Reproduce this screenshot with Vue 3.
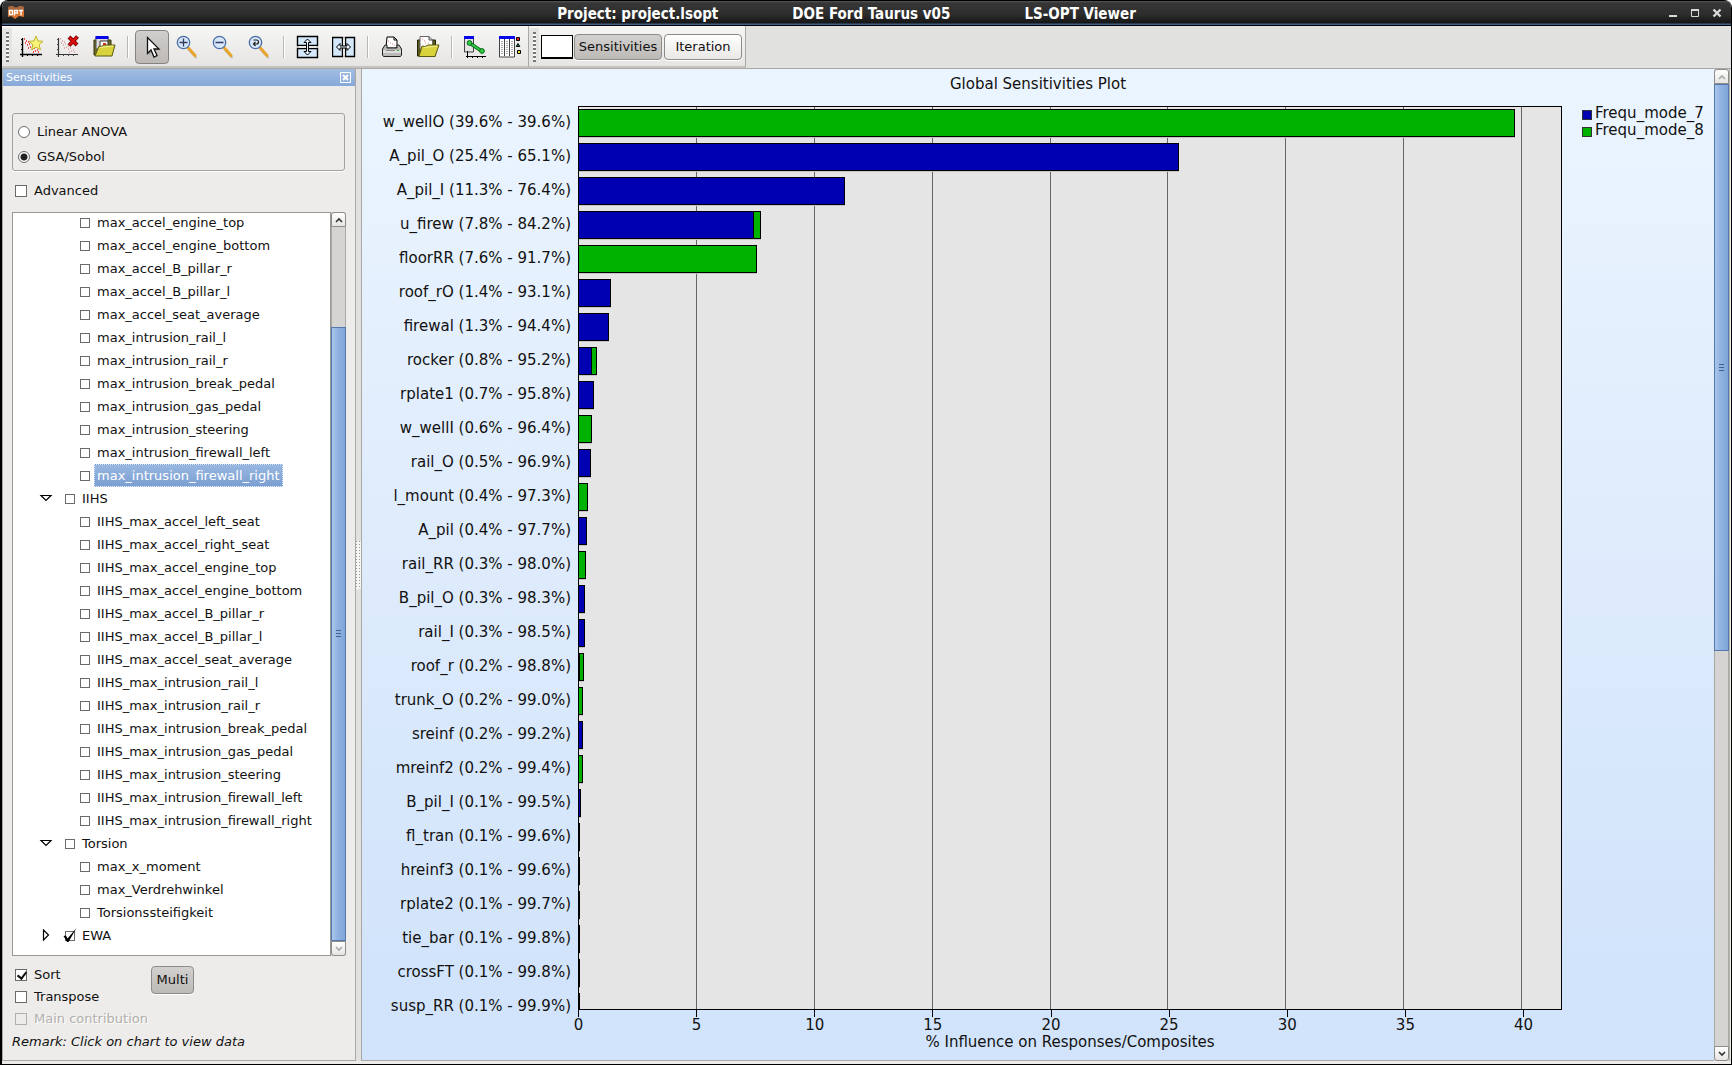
<script setup>
import { ref } from 'vue'

const method = ref('gsa')

const rows = []
const leaf = (name, selected = false) => rows.push({ name, level: 2, selected })
const branch = (name, open, checked = false) => rows.push({ name, level: 1, open, checked })

const accel = ['engine_top', 'engine_bottom', 'B_pillar_r', 'B_pillar_l', 'seat_average']
const intrusion = ['rail_l', 'rail_r', 'break_pedal', 'gas_pedal', 'steering', 'firewall_left', 'firewall_right']

accel.forEach((n) => leaf('max_accel_' + n))
intrusion.forEach((n) => leaf('max_intrusion_' + n, n === 'firewall_right'))
branch('IIHS', true)
;['left_seat', 'right_seat', ...accel].forEach((n) => leaf('IIHS_max_accel_' + n))
intrusion.forEach((n) => leaf('IIHS_max_intrusion_' + n))
branch('Torsion', true)
;['max_x_moment', 'max_Verdrehwinkel', 'Torsionssteifigkeit'].forEach((n) => leaf(n))
branch('EWA', false, true)

const axisMax = 41.65
const ticks = [0, 5, 10, 15, 20, 25, 30, 35, 40]
const share = (v) => (v / axisMax) * 100 + '%'

// name, own share, cumulative share, contribution of mode 7, contribution of mode 8
const bars = [
  ['w_wellO', '39.6', '39.6', 0, 39.7],
  ['A_pil_O', '25.4', '65.1', 25.46, 0],
  ['A_pil_I', '11.3', '76.4', 11.3, 0],
  ['u_firew', '7.8', '84.2', 7.44, 0.3],
  ['floorRR', '7.6', '91.7', 0, 7.55],
  ['roof_rO', '1.4', '93.1', 1.34, 0],
  ['firewal', '1.3', '94.4', 1.27, 0],
  ['rocker', '0.8', '95.2', 0.56, 0.19],
  ['rplate1', '0.7', '95.8', 0.65, 0],
  ['w_wellI', '0.6', '96.4', 0, 0.56],
  ['rail_O', '0.5', '96.9', 0.51, 0],
  ['l_mount', '0.4', '97.3', 0, 0.38],
  ['A_pil', '0.4', '97.7', 0.33, 0],
  ['rail_RR', '0.3', '98.0', 0, 0.28],
  ['B_pil_O', '0.3', '98.3', 0.26, 0],
  ['rail_I', '0.3', '98.5', 0.25, 0],
  ['roof_r', '0.2', '98.8', 0.05, 0.17],
  ['trunk_O', '0.2', '99.0', 0, 0.18],
  ['sreinf', '0.2', '99.2', 0.16, 0],
  ['mreinf2', '0.2', '99.4', 0, 0.17],
  ['B_pil_I', '0.1', '99.5', 0.08, 0],
  ['fl_tran', '0.1', '99.6', 0.05, 0],
  ['hreinf3', '0.1', '99.6', 0.05, 0],
  ['rplate2', '0.1', '99.7', 0.05, 0],
  ['tie_bar', '0.1', '99.8', 0.05, 0],
  ['crossFT', '0.1', '99.8', 0.05, 0],
  ['susp_RR', '0.1', '99.9', 0, 0.05]
]
</script>

<template>
  <div class="window">
    <header class="titlebar">
      <svg class="app-icon" width="18" height="14" viewBox="0 0 18 14">
        <path d="M1 1 L5 0 L9 2 L13 0 L17 1 V11 L12 10 L8 13 L4 10 L1 11 Z" fill="#d9752f" />
        <path d="M1 1 L5 0 L9 2 L13 0 L17 1 V4 H1 Z" fill="#a9673f" />
        <path d="M2.5 4.5h3v4h-3z M7.5 9.500v-5h3v2.500h-3 M12 4.500h4 M14 4.500v5" fill="none" stroke="#fff" stroke-width="1.300" />
      </svg>
      <h1 class="caption"><span>Project: project.lsopt</span><span>DOE Ford Taurus v05</span><span>LS-OPT Viewer</span></h1>
      <div class="controls">
        <button aria-label="Minimize"><svg width="10" height="10"><rect x="1" y="7" width="8" height="2" fill="#d8d8d6" /></svg></button>
        <button aria-label="Maximize"><svg width="10" height="10"><path d="M1.500 1.500h7v7h-7z" fill="none" stroke="#d8d8d6" /><path d="M1 2h8" stroke="#d8d8d6" stroke-width="2" /></svg></button>
        <button aria-label="Close"><svg width="10" height="10"><path d="M1.500 1.500l7 7M8.500 1.500l-7 7" stroke="#d8d8d6" stroke-width="2.400" /></svg></button>
      </div>
    </header>

    <nav class="toolbars">
      <div class="toolbar">
        <i class="handle"></i>
        <button class="tool" aria-label="New plot">
          <svg width="24" height="24" viewBox="0 0 24 24">
            <path d="M2.500 3v19M0 19.500h22" stroke="#000" stroke-width="1.400" />
            <path d="M1 4.500h2M1 9.500h2M1 14.500h2M7.500 19v2M12.500 19v2M17.500 19v2" stroke="#000" />
            <path d="M4 4h1M6 6h1M5 8h1M8 7h1M7 10h1M9 9h1M10 12h1M12 11h1M8 13h1M12 14h1M14 13h1M15 16h1M17 15h1M13 17h1M18 17h1" stroke="#f01818" stroke-width="1.400" />
            <path d="M16 1l2 5 5 .300-4 3.500 1.500 5-4.500-2.800-4.500 2.800 1.500-5-4-3.500 5-.300z" fill="#f6f27a" stroke="#c2b62c" />
          </svg>
        </button>
        <button class="tool" aria-label="Delete plot">
          <svg width="24" height="24" viewBox="0 0 24 24">
            <path d="M2.500 3v19M0 19.500h22" stroke="#333" stroke-width="1.200" />
            <path d="M1 4.500h2M1 9.500h2M1 14.500h2M7.500 19v2M12.500 19v2M17.500 19v2" stroke="#444" />
            <path d="M4 4h1M6 6h1M5 8h1M8 7h1M7 10h1M9 9h1M10 12h1M12 11h1M8 13h1M12 14h1M14 13h1M15 16h1M17 15h1M13 17h1M18 17h1" stroke="#dba0a0" stroke-width="1.400" />
            <path d="M13 2l8 8M21.500 1.500l-8.500 9" stroke="#700" stroke-width="4" />
            <path d="M13.500 2.500l7 7M21 2l-7.500 8" stroke="#e01010" stroke-width="2.400" />
          </svg>
        </button>
        <button class="tool" aria-label="Open plots">
          <svg width="24" height="24" viewBox="0 0 24 24">
            <path d="M2 5h17v15H2z" fill="#6b6b20" stroke="#33330c" />
            <path d="M4 2h12v12H4z" fill="#dcdcdc" stroke="#555" /><path d="M3.500 1h13v3h-13z" fill="#0505e8" />
            <path d="M8 6h8v7H8z" fill="#fff" stroke="#333" /><path d="M11 8h3v2h-3z" fill="#e22" />
            <path d="M3 21l4-10 2 .500 3-1.500h11l-3 11z" fill="#d8d23c" stroke="#5c5a14" /><path d="M8 12.500l13-1.500" stroke="#f4f09c" />
          </svg>
        </button>
        <i class="sep"></i>
        <button class="tool active" aria-label="Select">
          <svg width="24" height="24" viewBox="0 0 24 24">
            <path d="M9 5l11 10-5 .500 3 6-2.500 1-2.500-6-4 4z" fill="#888" opacity=".5" />
            <path d="M7.500 2.500v16l3.500-3.500 3 7 3-1.500-3-6.500h5z" fill="#fff" stroke="#111" stroke-width="1.300" />
          </svg>
        </button>
        <button v-for="z in ['in', 'out', 'reset']" :key="z" class="tool" :aria-label="'Zoom ' + z">
          <svg width="24" height="24" viewBox="1 0 24 24">
            <path d="M13 14l8.500 9" stroke="#999" stroke-width="2" opacity=".6" />
            <path d="M13 12.500l7 8" stroke="#e9a52c" stroke-width="3" stroke-linecap="round" />
            <circle cx="8.500" cy="7.500" r="6.200" fill="#d7e6fa" stroke="#4a6ea4" stroke-width="1.300" />
            <path v-if="z === 'in'" d="M4.500 7.500h8M8.500 3.500v8" stroke="#333a60" stroke-width="1.300" />
            <path v-else-if="z === 'out'" d="M4.500 7.500h8" stroke="#333a60" stroke-width="1.500" />
            <path v-else d="M6.500 5h3a1.800 1.800 0 0 1 0 4H6.500M8.500 7l-2 2 2 2" fill="none" stroke="#222" stroke-width="1.200" />
          </svg>
        </button>
        <i class="sep"></i>
        <button class="tool" aria-label="Split vertically">
          <svg width="24" height="24" viewBox="0 0 24 24">
            <path d="M1.500 1.500h20v9h-20zM1.500 13.500h20v9h-20z" fill="#d5e8fb" stroke="#000" stroke-width="1.400" />
            <path d="M2.500 12h18" stroke="#f4f4f3" stroke-width="1.600" />
            <path d="M11.500 4l3.500 3.500h-2.500v9H15L11.500 20 8 16.500h2.500v-9H8z" fill="#e8f2fc" stroke="#000" />
          </svg>
        </button>
        <button class="tool" aria-label="Split horizontally">
          <svg width="24" height="24" viewBox="0 0 24 24">
            <path d="M.500 2.500h10v19H.500zM13.500 2.500h9v19h-9z" fill="#d5e8fb" stroke="#000" stroke-width="1.400" />
            <path d="M12 3.500v17" stroke="#f4f4f3" stroke-width="1.600" />
            <path d="M4.500 12L8 8.500V11h7V8.500l3.500 3.500-3.500 3.500V13H8v2.500z" fill="#e8f2fc" stroke="#000" />
          </svg>
        </button>
        <i class="sep"></i>
        <button class="tool" aria-label="Print">
          <svg width="24" height="24" viewBox="0 0 24 24">
            <path d="M7 2h7l3 3v8H6z" fill="#fff" stroke="#000" /><path d="M14 2v3h3" fill="none" stroke="#000" />
            <path d="M8 6h1M10 8h1M12 9h1M14 10h1" stroke="#e88" />
            <path d="M5 10L2.500 14v6l1 1.500h17l1-1.500v-6L19 10h-2v3H7v-3z" fill="#b9b9b7" stroke="#222" />
            <path d="M3 15h18v3H3z" fill="#dededc" /><path d="M6 15.500h9" stroke="#888" /><path d="M17 15.500h2" stroke="#22b022" />
          </svg>
        </button>
        <button class="tool" aria-label="Export">
          <svg width="24" height="24" viewBox="0 0 24 24">
            <path d="M1.500 5h18v16h-18z" fill="#5a5818" stroke="#22220a" />
            <path d="M4 1.500h9l3.500 3.500v9H4z" fill="#fff" stroke="#666" /><path d="M13 1.500V5h3.500" fill="none" stroke="#444" />
            <path d="M6 4h1M8 6h1M9 8h1M12 8h1M13 10h1" stroke="#e88" />
            <path d="M3 21.500L6 11l3 .500 3-1.500h11l-4 11.500z" fill="#d8d23c" stroke="#5c5a14" /><path d="M8 12.500l13-1.500" stroke="#f4f09c" />
          </svg>
        </button>
        <i class="sep"></i>
        <button class="tool" aria-label="Link plots">
          <svg width="24" height="24" viewBox="3 0 24 24">
            <path d="M2.500 2h9v15h-9z" fill="#e4e4e4" stroke="#444" transform="translate(1 0)" /><path d="M3 1h10v3H3z" fill="#0505e8" />
            <path d="M6.500 16v7M5 21.500h20M11.500 21v2M16.500 21v2M21.500 21v2" stroke="#000" />
            <path d="M8.500 8l12 8" stroke="#0d6b20" stroke-width="3.400" /><path d="M8.500 8l12 8" stroke="#2fcc3f" stroke-width="1.600" />
            <circle cx="8.500" cy="8" r="2.400" fill="#2fcc3f" stroke="#0d6b20" /><circle cx="21" cy="16" r="2.400" fill="#2fcc3f" stroke="#0d6b20" />
          </svg>
        </button>
        <button class="tool narrow" aria-label="Table options">
          <svg width="24" height="24" viewBox="3 0 24 24">
            <path d="M3.500 2h15v20h-15z" fill="#fff" stroke="#444" /><path d="M3 1h16v3H3z" fill="#0505e8" />
            <path d="M8.500 4v17M13.500 4v17" stroke="#444" /><path d="M6 6v13M11 6v13M16 6v13" stroke="#aaa" stroke-width="2" stroke-dasharray="1 1" />
            <path d="M20.500 2.500h3v3h-3z" fill="#e02020" stroke="#000" /><path d="M22 8.500l1.800 3h-3.600z" fill="#177" stroke="#000" />
            <path d="M21.500 15.500h3v3h-3z" fill="#e8e020" stroke="#000" />
          </svg>
        </button>
      </div>
      <div class="toolbar">
        <i class="handle"></i>
        <button class="swatch" aria-label="Background colour"></button>
        <button class="push pressed sens">Sensitivities</button>
        <button class="push iter">Iteration</button>
      </div>
    </nav>

    <div class="body">
      <aside class="dock">
        <header class="dock-title">
          <span>Sensitivities</span>
          <button aria-label="Close panel"><svg width="11" height="11"><path d="M.500.500h10v10H.500z" fill="none" stroke="#fff" /><path d="M3 3l5 5M8 3l-5 5" stroke="#fff" stroke-width="2" /></svg></button>
        </header>

        <div class="methods">
          <label><input v-model="method" type="radio" value="anova" />Linear ANOVA</label>
          <label><input v-model="method" type="radio" value="gsa" />GSA/Sobol</label>
        </div>
        <label class="check advanced"><input type="checkbox" />Advanced</label>

        <div class="tree">
          <ul>
            <li v-for="r in rows" :key="r.name" :class="r.level === 1 ? 'branch' : 'leaf'">
              <svg v-if="r.level === 1" class="twist" width="14" height="14" viewBox="0 0 14 14">
                <path :d="r.open ? 'M2 3.500h10L7 8.500z' : 'M4.500 1v10l5-5z'" fill="#fff" stroke="#000" stroke-width="1.200" />
              </svg>
              <label>
                <input type="checkbox" :checked="r.checked" />
                <svg v-if="r.checked" class="tick" width="14" height="16" viewBox="0 0 14 16"><path d="M.500 9l2.500-.500 1.500 3L13.500 1 5.500 15H4z" fill="#000" /></svg>
                <span :class="{ selected: r.selected }">{{ r.name }}</span>
              </label>
            </li>
          </ul>
          <div class="scroll">
            <button aria-label="Scroll up"><svg width="8" height="6"><path d="M1 5l3-3 3 3" fill="none" stroke="#333" stroke-width="1.600" /></svg></button>
            <i class="before"></i>
            <i class="thumb"></i>
            <button class="off" aria-label="Scroll down"><svg width="8" height="6"><path d="M1 1l3 3 3-3" fill="none" stroke="#aaa" stroke-width="1.600" /></svg></button>
          </div>
        </div>

        <div class="options">
          <div class="checks">
            <label class="check"><input type="checkbox" checked />Sort</label>
            <label class="check"><input type="checkbox" />Transpose</label>
            <label class="check disabled"><input type="checkbox" disabled />Main contribution</label>
          </div>
          <button class="push pressed multi">Multi</button>
        </div>
        <p class="remark">Remark: Click on chart to view data</p>
      </aside>

      <div class="splitter"><i></i></div>

      <main class="chart">
        <h2>Global Sensitivities Plot</h2>
        <ul class="names">
          <li v-for="b in bars" :key="b[0]">{{ b[0] }} ({{ b[1] }}% - {{ b[2] }}%)</li>
        </ul>
        <div class="plot">
          <i v-for="t in ticks.slice(1)" :key="t" class="gridline" :style="{ left: share(t) }"></i>
          <div v-for="b in bars" :key="b[0]" class="bar-row">
            <i v-if="b[3]" class="bar mode7" :style="{ width: share(b[3]) }"></i>
            <i v-if="b[4]" class="bar mode8" :style="{ width: share(b[4]) }"></i>
          </div>
        </div>
        <ul class="legend">
          <li><i class="mode7"></i>Frequ_mode_7</li>
          <li><i class="mode8"></i>Frequ_mode_8</li>
        </ul>
        <div class="axis">
          <ol>
            <li v-for="t in ticks" :key="t" :style="{ left: share(t) }"><i></i><span>{{ t }}</span></li>
          </ol>
          <p>% Influence on Responses/Composites</p>
        </div>
      </main>

      <div class="scroll page">
        <button class="off" aria-label="Scroll up"><svg width="8" height="6"><path d="M1 5l3-3 3 3" fill="none" stroke="#aaa" stroke-width="1.600" /></svg></button>
        <i class="thumb"></i>
        <i class="after"></i>
        <button aria-label="Scroll down"><svg width="8" height="6"><path d="M1 1l3 3 3-3" fill="none" stroke="#333" stroke-width="1.600" /></svg></button>
      </div>
    </div>
  </div>
</template>

<style>
body {
  margin: 0;
  background: #fff;
}
</style>

<style scoped>
* {
  box-sizing: border-box;
}
ul, ol, p, h1, h2 {
  margin: 0;
  padding: 0;
  list-style: none;
  font-weight: normal;
}
button {
  margin: 0;
  padding: 0;
  border: 0;
  background: none;
  font: inherit;
  color: inherit;
}
.window {
  height: 100vh;
  min-height: 600px;
  display: flex;
  flex-direction: column;
  border: 1px solid #000;
  border-width: 0 1px 1px 2px;
  border-radius: 8px 8px 0 0;
  background: #edecea;
  color: #111;
  font: 13px/18px "DejaVu Sans", sans-serif;
  overflow: hidden;
}
.titlebar {
  flex: none;
  height: 26px;
  display: flex;
  align-items: center;
  padding: 0 9px 0 5px;
  border-top: 1px solid #000;
  border-bottom: 1px solid #000;
  background: linear-gradient(#555 0, #363636 2px, #2d2d2d 55%, #161616 22px, #3f5f88 23px);
}
.caption {
  flex: 1;
  display: flex;
  justify-content: center;
  gap: 74px;
  padding-top: 1px;
  color: #fff;
  font-family: "DejaVu Sans Condensed", "DejaVu Sans", sans-serif;
  font-size: 15px;
  font-weight: bold;
}
.controls {
  display: flex;
  gap: 12px;
}
.controls svg, .tool svg, .dock-title svg, .scroll svg {
  display: block;
}

.toolbars {
  flex: none;
  height: 43px;
  display: flex;
  background: #e1e1df;
  border-bottom: 1px solid #a9a8a5;
}
.toolbar {
  display: flex;
  align-items: center;
  padding-top: 2px;
  background: linear-gradient(#f6f6f5, #e6e5e3);
  border-right: 1px solid #a9a8a5;
  border-bottom: 2px solid #c4c3c0;
}
.handle {
  align-self: stretch;
  width: 10px;
  padding: 4px 0 4px 4px;
  background: #e4e4e2;
}
.toolbar:first-child .handle {
  margin-right: 2px;
}
.handle::before {
  content: "";
  display: block;
  width: 3px;
  height: 30px;
  background: repeating-linear-gradient(#777 0 2px, #f8f8f8 2px 4px);
}
.tool {
  width: 34px;
  height: 34px;
  margin: 0 1px;
  display: grid;
  place-items: center;
  border-radius: 4px;
}
.tool.narrow {
  width: 32px;
}
.tool.active {
  background: linear-gradient(#d0cfcd, #bdb9b6);
  border: 1px solid #86837f;
}
.sep {
  width: 2px;
  height: 22px;
  margin: 0 5px;
  border-left: 1px solid #b9b8b5;
  background: #fff;
}
.swatch {
  width: 32px;
  height: 24px;
  margin: 0 1px 0 2px;
  border: 1px solid #000;
  border-width: 1px 1px 2px 1px;
  background: #fff;
}
.push {
  height: 26px;
  border: 1px solid #8f8c88;
  border-radius: 4px;
  background: linear-gradient(#fff, #e9e8e6);
  box-shadow: 0 1px 0 #fff;
  text-align: center;
}
.push.pressed {
  background: linear-gradient(#d2d1cf, #bdbab6);
}
.sens {
  width: 88px;
}
.iter {
  width: 78px;
  margin: 0 3px 0 2px;
}

.body {
  flex: 1;
  min-height: 0;
  display: flex;
  padding: 0 1px 3px 0;
}
.dock {
  flex: none;
  width: 354px;
  display: flex;
  flex-direction: column;
  border: 1px solid #a9a8a5;
  border-top: 0;
}
.dock-title {
  height: 17px;
  display: flex;
  align-items: center;
  justify-content: space-between;
  padding: 0 4px 1px 3px;
  background: linear-gradient(#a2bde2, #86a9d9);
  color: #fff;
  font-size: 11px;
  line-height: 15px;
}
.methods {
  display: flex;
  flex-direction: column;
  gap: 5px;
  margin: 27px 10px 0 9px;
  padding: 8px 6px 3px 5px;
  border: 1px solid #a3a19e;
  border-radius: 3px;
  box-shadow: 0 1px 0 #fff;
}
.methods label, .check {
  display: flex;
  align-items: center;
  height: 20px;
}
input {
  appearance: none;
  flex: none;
  width: 12px;
  height: 12px;
  margin: 0 7px 0 0;
  border: 1px solid #6d6b68;
  background: #fff;
}
input[type="radio"] {
  border-radius: 50%;
}
input[type="radio"]:checked {
  background: radial-gradient(#222 0 3px, #fff 4px);
}
.check {
  height: 22px;
}
.advanced {
  height: 20px;
  margin: 10px 0 11px 12px;
}
.check input:checked::after {
  content: "";
  display: block;
  width: 4px;
  height: 7px;
  margin: 0 0 0 3px;
  border: solid #111;
  border-width: 0 2px 2px 0;
  transform: rotate(38deg);
}
.disabled {
  color: #b1afac;
  text-shadow: 1px 1px 0 #fff;
}
.disabled input {
  border-color: #b1afac;
  background: #edecea;
}

.tree {
  flex: 1;
  min-height: 0;
  display: flex;
  margin: 0 9px;
}
.tree ul {
  flex: 1;
  overflow: hidden;
  border: 1px solid #9a9895;
  background: #fff;
}
.tree li {
  height: 23px;
  display: flex;
  align-items: center;
}
.tree li:first-child {
  margin-top: -2px;
}
.tree label {
  position: relative;
  display: flex;
  align-items: center;
}
.leaf {
  padding-left: 67px;
}
.branch {
  padding-left: 26px;
}
.twist {
  margin-right: 12px;
}
.tree input {
  width: 10px;
  height: 10px;
  margin-right: 4px;
}
.tree label span {
  padding: 1px 2px;
  border: 1px solid transparent;
  line-height: 19px;
}
.tree label .selected {
  border: 1px dotted #dce9fa;
  background: linear-gradient(#98b7e1, #7b9fd2);
  color: #fff;
}
.tick {
  position: absolute;
  left: -2px;
  top: 3px;
}

.scroll {
  flex: none;
  width: 15px;
  display: flex;
  flex-direction: column;
  background: #d5d4d2;
}
.scroll button {
  flex: none;
  height: 15px;
  display: grid;
  place-items: center;
  border: 1px solid #8f8c88;
  background: linear-gradient(#fff, #e6e5e3);
}
.scroll button:first-child {
  border-radius: 3px 3px 0 0;
}
.scroll button:last-child {
  border-radius: 0 0 3px 3px;
}
.before {
  flex: 100;
  border: solid #a9a8a5;
  border-width: 0 1px;
}
.thumb {
  flex: 614;
  display: grid;
  place-items: center;
  border: 1px solid #5579ad;
  background: linear-gradient(90deg, #a9c6ec, #8fb2e0 45%, #7fa5d9);
}
.thumb::after {
  content: "";
  width: 5px;
  height: 7px;
  background: repeating-linear-gradient(#40608f 0 1px, transparent 1px 3px);
}
.page .thumb {
  flex: 566;
}
.after {
  flex: 396;
  border: solid #a9a8a5;
  border-width: 0 1px;
}
.page {
  width: 16px;
  border-right: 1px solid #b5b3b0;
}

.options {
  display: flex;
  align-items: flex-start;
  padding: 8px 0 0 12px;
}
.checks {
  width: 136px;
  white-space: nowrap;
}
.multi {
  width: 43px;
  height: 28px;
  margin-top: 2px;
}
.remark {
  margin: 3px 0 9px 9px;
  font-style: italic;
}

.splitter {
  flex: none;
  width: 5px;
  display: grid;
  place-items: center;
  background: #e1e1df;
}
.splitter i {
  width: 5px;
  height: 48px;
  background: repeating-linear-gradient(transparent 0 1px, #f6f6f5 1px 3px),
    repeating-linear-gradient(90deg, #999 0 1px, #f6f6f5 1px 3px);
}

.chart {
  flex: 1;
  min-width: 0;
  display: grid;
  grid-template: 37px minmax(0, 1fr) 50px / 216px minmax(0, 1fr) 152px;
  border-left: 1px solid #a9a8a5;
  border-bottom: 1px solid #a9a8a5;
  background: linear-gradient(#ebf5ff, #dfecfc 45%, #d2e4fb 90%);
  font-size: 15px;
}
.chart h2 {
  grid-column: 1 / -1;
  padding-top: 6px;
  text-align: center;
  font-size: 15px;
}
.names {
  grid-area: 2 / 1;
  padding-right: 7px;
  text-align: right;
  white-space: nowrap;
}
.names li {
  height: 34px;
  line-height: 32px;
}
.plot {
  grid-area: 2 / 2;
  position: relative;
  overflow: hidden;
  padding-top: 2px;
  border: 1px solid #000;
  background: #e5e5e5;
}
.gridline {
  position: absolute;
  top: 0;
  bottom: 0;
  width: 1px;
  margin-left: -1px;
  background: #666;
}
.bar-row {
  position: relative;
  display: flex;
  height: 34px;
}
.bar {
  height: 28px;
  border: 1px solid #000;
  border-left: 0;
  box-shadow: 0 1px 0 #c4c4c4;
}
.mode7 {
  background: #0000b2;
}
.mode8 {
  background: #00b200;
}
.legend {
  grid-area: 2 / 3;
  margin-top: -2px;
  padding: 0 0 0 20px;
  white-space: nowrap;
}
.legend li {
  display: flex;
  align-items: center;
  gap: 3px;
  height: 17px;
}
.legend i {
  width: 10px;
  height: 10px;
  margin-top: 5px;
  border: 1px solid #333;
}
.axis {
  grid-area: 3 / 2;
}
.axis ol {
  position: relative;
  height: 23px;
}
.axis li {
  position: absolute;
  top: 0;
  width: 1px;
  display: flex;
  flex-direction: column;
  align-items: center;
}
.axis li i {
  width: 1px;
  height: 7px;
  background: #000;
}
.axis li span {
  line-height: 16px;
}
.axis p {
  text-align: center;
}
</style>
